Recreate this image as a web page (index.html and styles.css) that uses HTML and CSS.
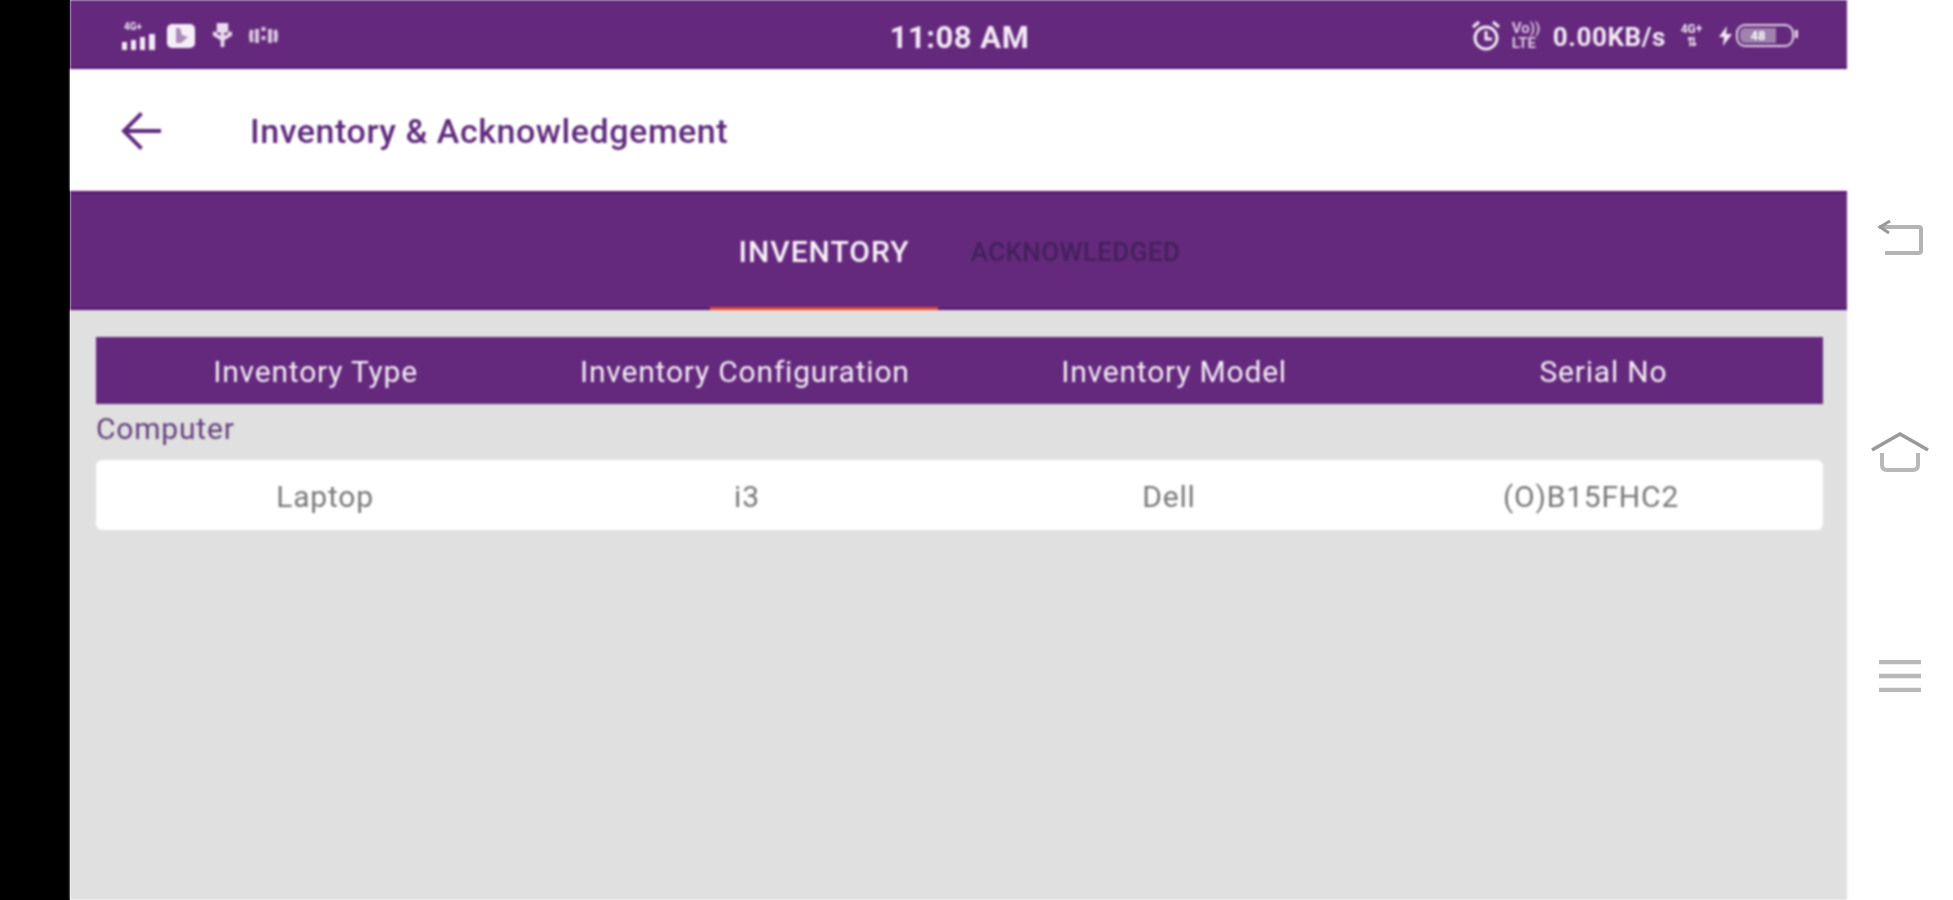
FILE: index.html
```html
<!DOCTYPE html>
<html>
<head>
    <title>Inventory &amp; Acknowledgement</title>
    <link rel="stylesheet" href="styles.css">
</head>
<body>
    <div class="black-bar"></div>

    <div class="app">
        <div class="status-bar">
            <div class="status-left">
                <svg class="ic-signal" viewBox="0 0 36 30" fill="#f3e9f6">
                    <text x="3" y="9" font-size="10" font-weight="700" font-family="Roboto, sans-serif">4G+</text>
                    <rect x="1" y="21" width="5" height="8"/>
                    <rect x="10" y="19" width="5" height="10"/>
                    <rect x="19" y="16" width="5" height="13"/>
                    <rect x="28" y="13" width="6" height="16"/>
                </svg>
                <svg class="ic-box" viewBox="0 0 28 24">
                    <rect x="0" y="0" width="28" height="24" rx="5" fill="#f5eef7"/>
                    <path d="M9 4v15l5 0 7-6-6-2-2-7z" fill="#a98bb8"/>
                </svg>
                <svg class="ic-usb" viewBox="0 0 22 26" fill="none" stroke="#eadcee" stroke-width="4">
                    <path d="M11 1v24M3 9v3l8 5 8-5V9"/>
                    <rect x="7" y="2" width="8" height="6" fill="#eadcee"/>
                </svg>
                <svg class="ic-vibrate" viewBox="0 0 31 24" fill="none" stroke="#d9c5e0" stroke-width="4">
                    <path d="M4 6q-2 6 0 12M9 5v14M22 5v14M27 6q2 6 0 12M15.500 3v4M15.500 12v4"/>
                </svg>
            </div>

            <div class="clock">11:08 AM</div>

            <div class="status-right">
                <svg class="ic-alarm" viewBox="0 0 30 32" fill="none" stroke="#f3e9f6" stroke-width="3">
                    <circle cx="15" cy="18" r="11"/>
                    <path d="M15 11v8h6M2 7l6-5M28 7l-6-5"/>
                </svg>
                <div class="volte"><span>Vo))</span><span>LTE</span></div>
                <div class="speed">0.00KB/s</div>
                <div class="net"><span>4G+</span><span>&#8645;</span></div>
                <svg class="ic-bolt" viewBox="0 0 13 20" fill="#f3e9f6">
                    <path d="M8 0 0 11h5l-1 9 9-12H7z"/>
                </svg>
                <div class="battery">
                    <div class="battery-fill">48</div>
                </div>
            </div>
        </div>

        <div class="app-header">
            <svg class="back-arrow" viewBox="0 0 42 40" fill="none" stroke="#5f2a7c" stroke-width="4">
                <path d="M41 20H3M21 2 3 20l18 18"/>
            </svg>
            <div class="page-title">Inventory &amp; Acknowledgement</div>
        </div>

        <div class="tabs">
            <div class="tab tab-active">INVENTORY</div>
            <div class="tab tab-off">ACKNOWLEDGED</div>
        </div>

        <div class="content">
            <div class="table-head">
                <div>Inventory Type</div>
                <div>Inventory Configuration</div>
                <div>Inventory Model</div>
                <div>Serial No</div>
            </div>
            <div class="group-name">Computer</div>
            <div class="table-row">
                <div>Laptop</div>
                <div>i3</div>
                <div>Dell</div>
                <div>(O)B15FHC2</div>
            </div>
        </div>
    </div>

    <div class="nav-rail">
        <svg class="nav-back" viewBox="0 0 46 36" fill="none" stroke="#b4b4b4" stroke-width="4">
            <path d="M2 7h40q2 0 2 2v22q0 2-3 2H8"/>
            <path d="M13 1 3 7l9 6" stroke-width="3" stroke="#999"/>
        </svg>
        <svg class="nav-home" viewBox="0 0 58 40" fill="none" stroke="#999" stroke-width="3.500">
            <path d="M1 18 29 2l28 16"/>
            <path d="M11 21v12q0 5 5 5h26q5 0 5-5V21" stroke="#b8b8b8" stroke-width="4"/>
        </svg>
        <svg class="nav-menu" viewBox="0 0 42 32" fill="none" stroke="#b8b8b8" stroke-width="4.500">
            <path d="M0 2h42M0 16h42M0 30h42"/>
        </svg>
    </div>
</body>
</html>
```

FILE: styles.css
```css
html, body {
    height: 100%;
}

body {
    margin: 0;
    display: flex;
    height: 900px;
    overflow: hidden;
    background-color: #fff;
    font-family: Roboto, "Liberation Sans", sans-serif;
}

.black-bar {
    width: 70px;
    background-color: #000;
}

.app {
    width: 1777px;
    display: flex;
    flex-direction: column;
    background-color: #e0e0e0;
    filter: blur(0.8px);
}

.status-bar {
    height: 69px;
    box-sizing: border-box;
    display: grid;
    grid-template-columns: 1fr auto 1fr;
    align-items: center;
    padding: 4px 49px 0 51px;
    background-color: #64297c;
    border-bottom: 2px solid #541070;
    color: #f3e9f6;
}

.status-left, .status-right {
    display: flex;
    align-items: center;
}

.status-right {
    justify-content: flex-end;
}

.ic-signal { width: 36px; height: 30px; margin-right: 10px; }
.ic-box { width: 28px; height: 24px; margin-right: 17px; }
.ic-usb { width: 21px; height: 25px; margin-right: 15px; }
.ic-vibrate { width: 31px; height: 24px; }

.clock {
    padding-top: 3px;
    font-size: 31px;
    font-weight: 700;
    letter-spacing: 0.5px;
}

.ic-alarm { width: 30px; height: 32px; margin-right: 11px; }

.volte {
    width: 32px;
    margin-right: 9px;
    display: flex;
    flex-direction: column;
    font-size: 15px;
    font-weight: 700;
    line-height: 15px;
    color: #d9c5e0;
}

.speed {
    padding-top: 3px;
    font-size: 26px;
    font-weight: 700;
    letter-spacing: 0.6px;
    margin-right: 13px;
}

.net {
    width: 25px;
    margin-right: 15px;
    display: flex;
    flex-direction: column;
    align-items: center;
    font-size: 12px;
    font-weight: 700;
    line-height: 13px;
}

.ic-bolt { width: 13px; height: 20px; margin-right: 4px; }

.battery {
    width: 58px;
    height: 23px;
    padding: 2px;
    box-sizing: border-box;
    border: 2px solid #e3d5e9;
    border-radius: 9px;
    position: relative;
    margin-right: 4px;
}

.battery::after {
    content: "";
    position: absolute;
    right: -6px;
    top: 4px;
    width: 3px;
    height: 8px;
    background-color: #e3d5e9;
}

.battery-fill {
    width: 36px;
    height: 100%;
    background-color: #9f82ae;
    border-radius: 5px 0 0 5px;
    color: #fff;
    font-size: 13px;
    font-weight: 700;
    line-height: 15px;
    text-align: center;
}

.app-header {
    height: 122px;
    display: flex;
    align-items: center;
    padding-left: 51px;
    background-color: #fff;
    border-bottom: 2px solid #541070;
}

.back-arrow {
    width: 41px;
    height: 40px;
    margin: 2px 88px 0 0;
}

.page-title {
    padding-top: 2px;
    font-size: 34px;
    font-weight: 500;
    letter-spacing: 0.55px;
    color: #5f2a7c;
}

.tabs {
    height: 115px;
    display: flex;
    justify-content: center;
    padding-left: 6px;
    background-color: #64297c;
    border-bottom: 2px solid #541070;
}

.tab {
    display: flex;
    align-items: center;
    justify-content: center;
    font-weight: 500;
    padding-top: 3px;
    border-bottom: 3px solid transparent;
    margin-bottom: -2px;
}

.tab-active {
    width: 228px;
    font-size: 30px;
    letter-spacing: 1px;
    color: #f8f1fa;
    border-bottom-color: #e5482e;
}

.tab-off {
    width: 275px;
    font-size: 26px;
    letter-spacing: 0.4px;
    color: #44205c;
}

.content {
    flex: 1;
    padding: 27px 24px 0 26px;
}

.table-head, .table-row {
    display: grid;
    grid-template-columns: repeat(4, 1fr);
    align-items: center;
    text-align: center;
    font-size: 30px;
    letter-spacing: 0.8px;
}

.table-head {
    height: 67px;
    box-sizing: border-box;
    padding: 2px 5px 0;
    background-color: #64297c;
    color: #f5edf8;
}

.group-name {
    height: 56px;
    line-height: 50px;
    font-size: 30px;
    letter-spacing: 0.8px;
    color: #65407c;
}

.table-row {
    height: 70px;
    box-sizing: border-box;
    padding: 2px 21px 0 18px;
    background-color: #fff;
    border-radius: 6px;
    color: #787878;
}

.nav-rail {
    flex: 1;
    display: flex;
    flex-direction: column;
    align-items: center;
    padding-top: 220px;
}

.nav-back { width: 46px; height: 36px; margin-bottom: 176px; }
.nav-home { width: 58px; height: 40px; margin-bottom: 188px; }
.nav-menu { width: 42px; height: 32px; }
```
